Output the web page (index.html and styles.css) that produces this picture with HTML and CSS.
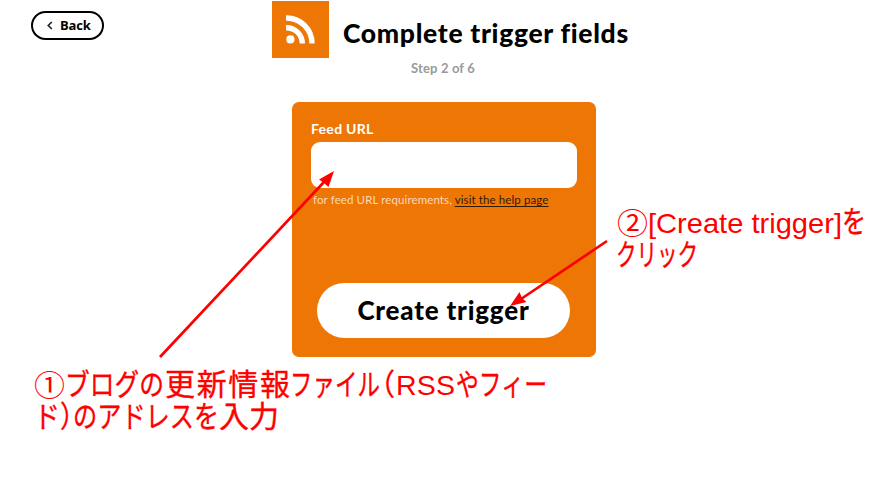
FILE: index.html
```html
<!DOCTYPE html>
<html lang="ja">
<head>
<meta charset="utf-8">
<title>Complete trigger fields</title>
<link rel="stylesheet" href="styles.css">
</head>
<body>
<div class="page">
  <header class="header">
    <button class="back"><svg width="6" height="9" viewBox="0 0 6 9"><path d="M4.8 1 1.3 4.5 4.8 8" fill="none" stroke="#222" stroke-width="1.7"/></svg><span>Back</span></button>
    <div class="logo"><svg width="29" height="29" viewBox="0 0 29 29"><circle cx="4.4" cy="24.4" r="4.1" fill="#fff"/><path d="M0 12.7A15.8 15.8 0 0 1 16.3 28.5M0 3A25.5 25.5 0 0 1 26 28.5" fill="none" stroke="#fff" stroke-width="5.4"/></svg></div>
    <h1 class="title">Complete trigger fields</h1>
  </header>
  <p class="step">Step 2 of 6</p>
  <main class="card">
    <label class="label" for="feed">Feed URL</label>
    <input class="field" id="feed" type="text">
    <p class="hint">for feed URL requirements, <a class="help">visit the help page</a></p>
    <button class="create">Create trigger</button>
  </main>
  <svg class="notes" width="885" height="478" viewBox="0 0 885 478">
    <g class="arrows">
      <path d="M160 357 324 182M607 241 521 299" fill="none" stroke="#f00" stroke-width="2.700"/>
      <path d="M334 171 328.500 187 324 183 319 179.500Z"/>
      <path d="M510 306 519.500 292 522 298 526.500 302Z"/>
    </g>
    <g class="note">
      <text class="number" x="34" y="396" textLength="31" lengthAdjust="spacingAndGlyphs">①</text>
      <text x="65" y="395" textLength="99" lengthAdjust="spacingAndGlyphs">ブログの</text>
      <text x="165" y="395" textLength="125" lengthAdjust="spacing">更新情報</text>
      <text x="290" y="395" textLength="90" lengthAdjust="spacingAndGlyphs">ファイル</text>
      <text class="half" x="381" y="395" textLength="14" lengthAdjust="spacingAndGlyphs">（</text>
      <text class="latin" x="396" y="395" textLength="59" lengthAdjust="spacing">RSS</text>
      <text x="456" y="395" textLength="91" lengthAdjust="spacingAndGlyphs">やフィー</text>
      <text x="34" y="427" textLength="26" lengthAdjust="spacingAndGlyphs">ド</text>
      <text class="half" x="60" y="427" textLength="13" lengthAdjust="spacingAndGlyphs">）</text>
      <text x="73" y="427" textLength="121" lengthAdjust="spacingAndGlyphs">のアドレス</text>
      <text x="194" y="427" textLength="25" lengthAdjust="spacingAndGlyphs">を</text>
      <text x="219" y="427" textLength="60" lengthAdjust="spacingAndGlyphs">入力</text>
      <text class="number" x="617" y="234" textLength="31" lengthAdjust="spacingAndGlyphs">②</text>
      <text class="latin" x="648" y="233" textLength="194" lengthAdjust="spacingAndGlyphs">[Create trigger]</text>
      <text x="842" y="232" textLength="24" lengthAdjust="spacingAndGlyphs">を</text>
      <text x="616" y="265" textLength="82" lengthAdjust="spacingAndGlyphs">クリック</text>
    </g>
  </svg>
</div>
</body>
</html>
```
FILE: styles.css
```css
* { box-sizing: border-box; }
body { margin: 0; background: #fff; font-family: Lato, "Noto Sans CJK JP", sans-serif; color: #000; font-variant-ligatures: none; }
.page { position: relative; width: 885px; height: 478px; overflow: hidden; }
.header { display: flex; align-items: flex-start; height: 58px; padding: 1px 0 0 31px; }
.back { display: flex; align-items: center; gap: 7px; width: 73px; height: 29px; margin: 10px 168px 0 0; padding: 0 0 1px 14px; border: 2px solid #000; border-radius: 15px; background: #fff; color: #000; font: 700 13px/20px "Open Sans", sans-serif; letter-spacing: -.2px; }
.logo { display: flex; align-items: center; justify-content: center; width: 57px; height: 57px; background: #ed7605; }
.title { margin: 15px 0 0 14px; font-size: 26.500px; line-height: 34px; font-weight: 900; letter-spacing: .68px; white-space: nowrap; }
.step { margin: 2px 0 0; height: 17px; padding-left: 1px; font-size: 13px; line-height: 17px; font-weight: 700; color: #999; text-align: center; letter-spacing: .15px; }
.card { display: flex; flex-direction: column; width: 304px; height: 255px; margin: 25px 0 0 292px; padding: 18px 19px; border-radius: 7px; background: #ed7605; }
.label { height: 22px; font-size: 14px; line-height: 18px; font-weight: 700; letter-spacing: .3px; color: #fff; }
.field { width: 266px; height: 46px; padding: 0 12px; border: 0; border-radius: 9px; background: #fff; }
.hint { margin: 4px 0 0 2px; font-size: 11.500px; line-height: 16px; letter-spacing: .11px; color: #fbd9b8; white-space: nowrap; }
.help { color: #331a03; text-decoration: underline; text-underline-offset: 2px; }
.create { width: 253px; height: 55px; margin: 75px 0 0 6px; padding: 0 0 2px; border: 0; border-radius: 28px; background: #fff; color: #000; font: 900 26px/34px Lato, sans-serif; letter-spacing: .8px; }
.notes { position: absolute; left: 0; top: 0; }
.arrows, .note { fill: #f00; }
.note { font: 400 30px "Noto Sans CJK JP", sans-serif; stroke: #f00; stroke-width: .35px; }
.half { font-feature-settings: "halt"; }
.number { stroke: none; }
.latin { font-family: "Liberation Sans", sans-serif; font-size: 28.500px; stroke: none; }
```
